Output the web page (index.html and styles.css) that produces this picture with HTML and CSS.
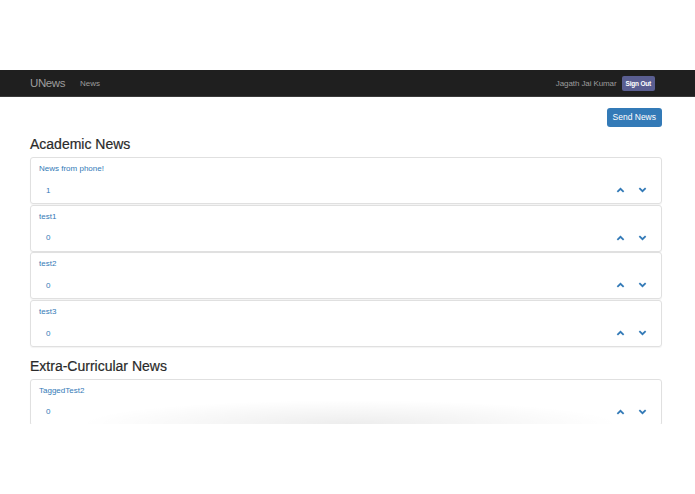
FILE: index.html
```html
<!DOCTYPE html>
<html>
<head>
<meta charset="utf-8">
<link rel="stylesheet" href="styles.css">
</head>
<body>
<div class="top-space"></div>
<nav class="navbar">
  <div class="nav-left">
    <span class="brand">UNews</span>
    <span class="nav-link">News</span>
  </div>
  <div class="nav-right">
    <span class="user">Jagath Jai Kumar</span>
    <span class="signout">Sign Out</span>
  </div>
</nav>
<div class="page">
  <div class="container">
    <div class="actions"><span class="btn-primary">Send News</span></div>
    <h2 class="section-title">Academic News</h2>
    <div class="card">
      <div class="card-title">News from phone!</div>
      <div class="card-row"><span class="count">1</span><span class="votes"><svg class="chev" viewBox="0 0 10 6"><polyline points="1.5,5 5,1.6 8.5,5"/></svg><svg class="chev" viewBox="0 0 10 6"><polyline points="1.5,1 5,4.4 8.5,1"/></svg></span></div>
    </div>
    <div class="card">
      <div class="card-title">test1</div>
      <div class="card-row"><span class="count">0</span><span class="votes"><svg class="chev" viewBox="0 0 10 6"><polyline points="1.5,5 5,1.6 8.5,5"/></svg><svg class="chev" viewBox="0 0 10 6"><polyline points="1.5,1 5,4.4 8.5,1"/></svg></span></div>
    </div>
    <div class="card">
      <div class="card-title">test2</div>
      <div class="card-row"><span class="count">0</span><span class="votes"><svg class="chev" viewBox="0 0 10 6"><polyline points="1.5,5 5,1.6 8.5,5"/></svg><svg class="chev" viewBox="0 0 10 6"><polyline points="1.5,1 5,4.4 8.5,1"/></svg></span></div>
    </div>
    <div class="card">
      <div class="card-title">test3</div>
      <div class="card-row"><span class="count">0</span><span class="votes"><svg class="chev" viewBox="0 0 10 6"><polyline points="1.5,5 5,1.6 8.5,5"/></svg><svg class="chev" viewBox="0 0 10 6"><polyline points="1.5,1 5,4.4 8.5,1"/></svg></span></div>
    </div>
    <h2 class="section-title second">Extra-Curricular News</h2>
    <div class="card">
      <div class="card-title">TaggedTest2</div>
      <div class="card-row"><span class="count">0</span><span class="votes"><svg class="chev" viewBox="0 0 10 6"><polyline points="1.5,5 5,1.6 8.5,5"/></svg><svg class="chev" viewBox="0 0 10 6"><polyline points="1.5,1 5,4.4 8.5,1"/></svg></span></div>
    </div>
  </div>
  <div class="bottom-shade"></div>
</div>
</body>
</html>
```
FILE: styles.css
```css
* { box-sizing: border-box; }
html, body { margin: 0; padding: 0; background: #fff; }
body { font-family: "Liberation Sans", Arial, sans-serif; color: #333; }

.top-space { height: 70px; }

.navbar {
  height: 27px;
  background: #1f1f1f;
  border-bottom: 1px solid #3a3a3a;
  display: flex;
  align-items: center;
  justify-content: space-between;
  padding: 0 40px 0 30px;
}
.nav-left, .nav-right { display: flex; align-items: center; }
.brand { font-size: 11.5px; color: #9d9d9d; letter-spacing: -0.4px; }
.nav-link { font-size: 8px; color: #9d9d9d; margin-left: 15px; }
.user { font-size: 8px; color: #9d9d9d; letter-spacing: -0.1px; }
.signout {
  margin-left: 5px;
  background: #5a5e91;
  color: #fff;
  font-size: 6.5px;
  font-weight: bold;
  height: 15px;
  line-height: 15px;
  padding: 0 4px;
  border-radius: 2px;
  letter-spacing: -0.2px;
}

.page {
  position: relative;
  height: 327px;
  overflow: hidden;
}
.container { padding: 0 33px 0 30px; }
.actions { display: flex; justify-content: flex-end; padding-top: 11px; }
.btn-primary {
  background: #337ab7;
  color: #fff;
  font-size: 8.5px;
  height: 19px;
  line-height: 19px;
  padding: 0 6px;
  border-radius: 3px;
}
.section-title {
  margin: 0;
  font-size: 14px;
  font-weight: normal;
  line-height: 17px;
  padding-top: 9px;
  height: 30px;
  color: #2a2a2a;
  -webkit-text-stroke: 0.2px #2a2a2a;
}
.section-title.second { padding-top: 10px; height: 31px; }

.card {
  border: 1px solid #e0e0e0;
  border-radius: 3px;
  box-shadow: 0 1px 1px rgba(0,0,0,0.05);
  height: 47px;
  margin-bottom: 0.7px;
  padding: 6px 14px 0 8px;
}
.card-title { font-size: 8px; line-height: 10px; color: #337ab7; }
.card-row {
  margin-top: 11px;
  height: 10px;
  display: flex;
  align-items: center;
  justify-content: space-between;
}
.count { font-size: 8px; color: #337ab7; padding-left: 7px; }
.votes { display: flex; align-items: center; gap: 13px; }
.chev { width: 9px; height: 6px; }
.chev polyline { fill: none; stroke: #337ab7; stroke-width: 2; stroke-linecap: butt; }

.bottom-shade {
  position: absolute;
  left: 80px;
  width: 540px;
  bottom: 0;
  height: 24px;
  background: radial-gradient(ellipse 50% 100% at 50% 100%, rgba(0,0,0,0.07), rgba(0,0,0,0) 100%);
  pointer-events: none;
}
```
